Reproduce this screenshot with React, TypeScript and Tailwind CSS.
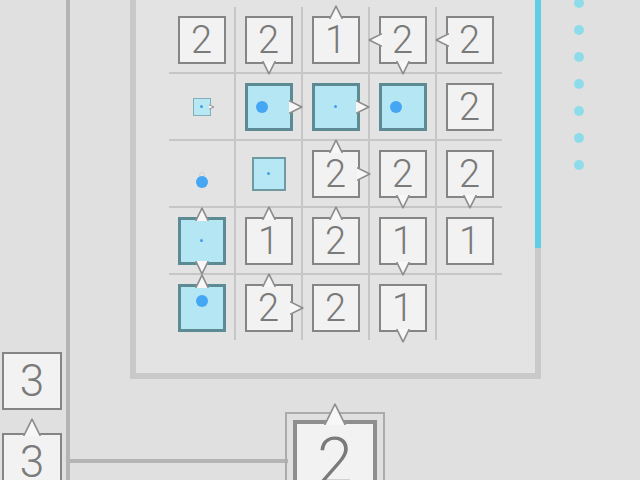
import React from 'react';

type Dir = 'up' | 'down' | 'left' | 'right';

type Cell = {
  n?: string;
  blue?: 'full' | 'mid' | 'tiny';
  dot?: 'big' | 'small';
  dotCls?: string;
  bead?: boolean;
  arrows?: Dir[];
};

const ROT: Record<Dir, string> = {
  up: 'rotate-0',
  down: 'rotate-180',
  left: '-rotate-90',
  right: 'rotate-90',
};

// little pointer triangle sitting on a tile edge, its base covers the border
function Arrow({ dir, size }: { dir: Dir; size: number }) {
  const edge = 1 - size;
  const pos: React.CSSProperties =
    dir === 'up'
      ? { top: edge, left: '50%', marginLeft: -size / 2 }
      : dir === 'down'
        ? { bottom: edge, left: '50%', marginLeft: -size / 2 }
        : dir === 'left'
          ? { left: edge, top: '50%', marginTop: -size / 2 }
          : { right: edge, top: '50%', marginTop: -size / 2 };
  return (
    <svg
      width={size}
      height={size}
      viewBox={`0 0 ${size} ${size}`}
      className={`absolute z-10 ${ROT[dir]}`}
      style={pos}
    >
      <polygon points={`0,${size} ${size / 2},1 ${size},${size}`} fill="#f7f7f7" />
      <polyline
        points={`0.7,${size} ${size / 2},1.2 ${size - 0.7},${size}`}
        fill="none"
        stroke="#8c8c8c"
        strokeWidth={size > 10 ? 1.6 : 1}
        strokeLinejoin="round"
      />
    </svg>
  );
}

const board: Cell[] = [
  { n: '2' },
  { n: '2', arrows: ['down'] },
  { n: '1', arrows: ['up'] },
  { n: '2', arrows: ['left', 'down'] },
  { n: '2', arrows: ['left'] },

  { blue: 'tiny', dot: 'small', arrows: ['right'] },
  { blue: 'full', dot: 'big', dotCls: '-translate-x-[7px]', arrows: ['right'] },
  { blue: 'full', dot: 'small', arrows: ['right'] },
  { blue: 'full', dot: 'big', dotCls: '-translate-x-[7px]' },
  { n: '2' },

  { bead: true },
  { blue: 'mid', dot: 'small' },
  { n: '2', arrows: ['up', 'right'] },
  { n: '2', arrows: ['down'] },
  { n: '2', arrows: ['down'] },

  { blue: 'full', dot: 'small', arrows: ['up', 'down'] },
  { n: '1', arrows: ['up'] },
  { n: '2', arrows: ['up'] },
  { n: '1', arrows: ['down'] },
  { n: '1' },

  { blue: 'full', dot: 'big', dotCls: '-translate-y-[7px]', arrows: ['up'] },
  { n: '2', arrows: ['up', 'right'] },
  { n: '2' },
  { n: '1', arrows: ['down'] },
  {},
];

function Dot({ kind, cls = '' }: { kind: 'big' | 'small'; cls?: string }) {
  return kind === 'big' ? (
    <span className={`w-[12px] h-[12px] rounded-full bg-[#45a6f3] ${cls}`} />
  ) : (
    <span className={`w-[3px] h-[3px] rounded-full bg-[#3f9fe8] ${cls}`} />
  );
}

function BoardCell({ cell }: { cell: Cell }) {
  let piece: React.ReactNode = null;

  if (cell.n) {
    piece = (
      <div className="relative w-[48px] h-[48px] border-2 border-[#858585] bg-[#f2f2f2] flex items-center justify-center text-[38px] leading-none font-light text-[#7a7a7a]">
        {cell.n}
        {cell.arrows?.map((d) => <Arrow key={d} dir={d} size={14} />)}
      </div>
    );
  } else if (cell.blue === 'full') {
    piece = (
      <div className="relative w-[48px] h-[48px] border-[3px] border-[#5d8b93] bg-[#b4e6f3] flex items-center justify-center">
        {cell.dot && <Dot kind={cell.dot} cls={cell.dotCls} />}
        {cell.arrows?.map((d) => <Arrow key={d} dir={d} size={14} />)}
      </div>
    );
  } else if (cell.blue === 'mid') {
    piece = (
      <div className="relative w-[34px] h-[34px] border-2 border-[#6f9aa2] bg-[#b6e7f4] flex items-center justify-center">
        {cell.dot && <Dot kind={cell.dot} />}
      </div>
    );
  } else if (cell.blue === 'tiny') {
    piece = (
      <div className="relative w-[18px] h-[18px] border border-[#7fb0ba] bg-[#b9e8f5] flex items-center justify-center">
        {cell.dot && <Dot kind={cell.dot} />}
        {cell.arrows?.map((d) => <Arrow key={d} dir={d} size={6} />)}
      </div>
    );
  } else if (cell.bead) {
    piece = (
      <div className="relative flex flex-col items-center translate-y-[6px]">
        <span className="w-[6px] h-[6px] rounded-full border border-[#d2d2d2] mb-[-2px]" />
        <Dot kind="big" />
      </div>
    );
  }

  return <div className="bg-[#e3e3e3] flex items-center justify-center">{piece}</div>;
}

export default function App() {
  return (
    <div
      className="relative w-[640px] h-[480px] overflow-hidden bg-[#e0e0e0]"
      style={{ fontFamily: 'Roboto, "Liberation Sans", sans-serif' }}
    >
      {/* wire running down the left side and across to the exit tile */}
      <div className="absolute left-[66px] top-0 w-[4px] h-[480px] bg-[#b4b4b4]" />
      <div className="absolute left-[68px] top-[459px] w-[220px] h-[4px] bg-[#b4b4b4]" />

      {/* board frame */}
      <div className="absolute left-[130px] top-[-32px] w-[411px] h-[411px] border-[6px] border-[#c9c9c9] bg-[#e3e3e3] pl-[33px] pt-[33px]">
        <div className="absolute right-[-6px] top-[-6px] w-[6px] h-[280px] bg-[#62cde6]" />
        <div className="grid grid-cols-5 grid-rows-5 gap-[2px] w-[333px] h-[333px] bg-[#c6c6c6]">
          {board.map((c, i) => (
            <BoardCell key={i} cell={c} />
          ))}
        </div>
      </div>

      {/* move counter dots */}
      <div className="absolute left-[574px] top-[-2px] flex flex-col gap-[17px]">
        {Array.from({ length: 7 }).map((_, i) => (
          <span key={i} className="w-[10px] h-[10px] rounded-full bg-[#8edcea]" />
        ))}
      </div>

      {/* stack on the left */}
      <div className="absolute left-[2px] top-[352px] flex flex-col gap-[23px]">
        <div className="relative w-[60px] h-[58px] border-2 border-[#858585] bg-[#f2f2f2] flex items-center justify-center text-[44px] leading-none font-light text-[#7a7a7a]">
          3
        </div>
        <div className="relative w-[60px] h-[58px] border-2 border-[#858585] bg-[#f2f2f2] flex items-center justify-center text-[44px] leading-none font-light text-[#7a7a7a]">
          3
          <Arrow dir="up" size={18} />
        </div>
      </div>

      {/* exit tile */}
      <div className="absolute left-[285px] top-[412px] border-2 border-[#ababab] p-[6px]">
        <div className="relative w-[84px] h-[84px] border-4 border-[#8e8e8e] bg-[#f2f2f2] flex items-center justify-center text-[64px] leading-none font-light text-[#7a7a7a]">
          2
          <Arrow dir="up" size={22} />
        </div>
      </div>
    </div>
  );
}
